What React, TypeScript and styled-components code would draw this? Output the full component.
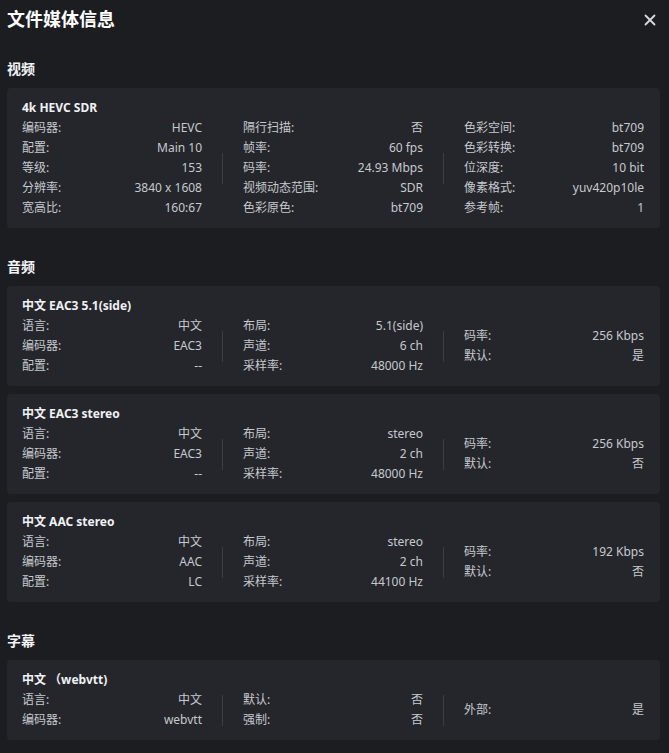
import React from "react";
import { createGlobalStyle, styled } from "styled-components";

const GlobalStyle = createGlobalStyle`
  html, body {
    margin: 0;
    padding: 0;
    background: #1b1d21;
  }
  body {
    font-family: "Noto Sans", "Noto Sans CJK SC", sans-serif;
    color: #c9ccd1;
  }
`;

const Page = styled.div`
  padding: 0 9px 12px 7px;
  background: #1b1d21;
  min-height: 753px;
  box-sizing: border-box;
`;

const Header = styled.div`
  display: flex;
  justify-content: space-between;
  align-items: center;
  padding-top: 8px;
  height: 22px;
`;

const Title = styled.h1`
  margin: 0;
  font-size: 18px;
  line-height: 22px;
  font-weight: 700;
  color: #ffffff;
`;

const CloseButton = styled.button`
  display: flex;
  align-items: center;
  justify-content: center;
  width: 20px;
  height: 20px;
  margin-top: 2px;
  padding: 0;
  border: none;
  background: transparent;
  color: #d6dbe3;
  cursor: pointer;
`;

const Section = styled.section`
  margin-top: 29px;
`;

const SectionTitle = styled.h2`
  margin: 0 0 9px;
  font-size: 14px;
  line-height: 20px;
  font-weight: 700;
  color: #f2f3f5;
`;

const CardList = styled.div`
  display: flex;
  flex-direction: column;
  gap: 8px;
`;

const Card = styled.div`
  background: #24262b;
  border-radius: 4px;
  padding: 10px 16px 10px 15px;
`;

const CardTitle = styled.div`
  font-size: 12px;
  line-height: 20px;
  font-weight: 700;
  color: #f0f1f3;
`;

const Columns = styled.div`
  display: flex;
  align-items: stretch;
`;

const Column = styled.div`
  flex: 1;
  display: flex;
  flex-direction: column;
  justify-content: center;
  min-width: 0;
`;

const Divider = styled.div`
  width: 1px;
  height: 31px;
  margin: 0 20px;
  align-self: center;
  background: #3a3e44;
`;

const Row = styled.div`
  display: flex;
  justify-content: space-between;
  font-size: 12px;
  line-height: 20px;
`;

const Label = styled.span`
  color: #c6c9ce;
`;

const Value = styled.span`
  color: #c6c9ce;
  text-align: right;
`;

type Pair = [string, string];

type StreamInfo = {
  title: string;
  columns: Pair[][];
};

const video: StreamInfo[] = [
  {
    title: "4k HEVC SDR",
    columns: [
      [
        ["编码器", "HEVC"],
        ["配置", "Main 10"],
        ["等级", "153"],
        ["分辨率", "3840 x 1608"],
        ["宽高比", "160:67"],
      ],
      [
        ["隔行扫描", "否"],
        ["帧率", "60 fps"],
        ["码率", "24.93 Mbps"],
        ["视频动态范围", "SDR"],
        ["色彩原色", "bt709"],
      ],
      [
        ["色彩空间", "bt709"],
        ["色彩转换", "bt709"],
        ["位深度", "10 bit"],
        ["像素格式", "yuv420p10le"],
        ["参考帧", "1"],
      ],
    ],
  },
];

const audio: StreamInfo[] = [
  {
    title: "中文 EAC3 5.1(side)",
    columns: [
      [
        ["语言", "中文"],
        ["编码器", "EAC3"],
        ["配置", "--"],
      ],
      [
        ["布局", "5.1(side)"],
        ["声道", "6 ch"],
        ["采样率", "48000 Hz"],
      ],
      [
        ["码率", "256 Kbps"],
        ["默认", "是"],
      ],
    ],
  },
  {
    title: "中文 EAC3 stereo",
    columns: [
      [
        ["语言", "中文"],
        ["编码器", "EAC3"],
        ["配置", "--"],
      ],
      [
        ["布局", "stereo"],
        ["声道", "2 ch"],
        ["采样率", "48000 Hz"],
      ],
      [
        ["码率", "256 Kbps"],
        ["默认", "否"],
      ],
    ],
  },
  {
    title: "中文 AAC stereo",
    columns: [
      [
        ["语言", "中文"],
        ["编码器", "AAC"],
        ["配置", "LC"],
      ],
      [
        ["布局", "stereo"],
        ["声道", "2 ch"],
        ["采样率", "44100 Hz"],
      ],
      [
        ["码率", "192 Kbps"],
        ["默认", "否"],
      ],
    ],
  },
];

const subtitles: StreamInfo[] = [
  {
    title: "中文 （webvtt)",
    columns: [
      [
        ["语言", "中文"],
        ["编码器", "webvtt"],
      ],
      [
        ["默认", "否"],
        ["强制", "否"],
      ],
      [["外部", "是"]],
    ],
  },
];

const StreamCard = ({ info }: { info: StreamInfo }) => (
  <Card>
    <CardTitle>{info.title}</CardTitle>
    <Columns>
      {info.columns.map((col, i) => (
        <React.Fragment key={i}>
          {i > 0 && <Divider />}
          <Column>
            {col.map(([label, value]) => (
              <Row key={label}>
                <Label>{label}:</Label>
                <Value>{value}</Value>
              </Row>
            ))}
          </Column>
        </React.Fragment>
      ))}
    </Columns>
  </Card>
);

const InfoSection = ({ title, items }: { title: string; items: StreamInfo[] }) => (
  <Section>
    <SectionTitle>{title}</SectionTitle>
    <CardList>
      {items.map((item) => (
        <StreamCard key={item.title} info={item} />
      ))}
    </CardList>
  </Section>
);

const App = () => {
  return (
    <React.Fragment>
      <GlobalStyle />
      <Page>
        <Header>
          <Title>文件媒体信息</Title>
          <CloseButton aria-label="关闭">
            <svg width="12" height="12" viewBox="0 0 12 12">
              <path d="M1.5 1.5 L10.5 10.5 M10.5 1.5 L1.5 10.5" stroke="currentColor" strokeWidth="1.8" strokeLinecap="round" />
            </svg>
          </CloseButton>
        </Header>
        <InfoSection title="视频" items={video} />
        <InfoSection title="音频" items={audio} />
        <InfoSection title="字幕" items={subtitles} />
      </Page>
    </React.Fragment>
  );
};

export default App;
